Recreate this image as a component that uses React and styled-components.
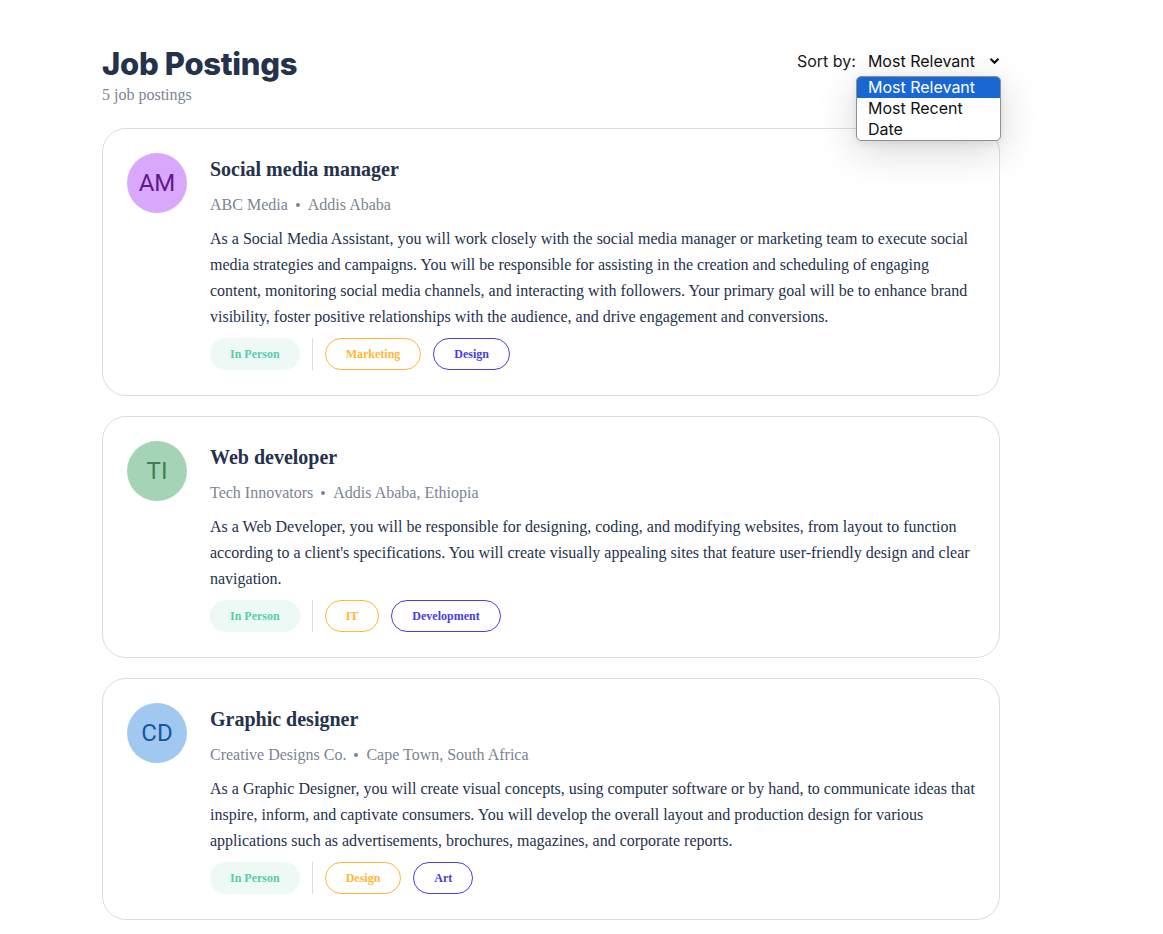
import React from "react";
import styled, { createGlobalStyle } from "styled-components";

const GlobalStyle = createGlobalStyle`
  html, body { margin: 0; padding: 0; background: #ffffff; }
  body { font-family: "Liberation Serif", "Times New Roman", serif; }
  * { box-sizing: border-box; }
`;

const Page = styled.main`
  width: 898px;
  margin-left: 102px;
  padding-top: 44px;
  padding-bottom: 40px;
`;

const Header = styled.header`
  display: flex;
  justify-content: space-between;
  align-items: flex-start;
  margin-bottom: 22px;
`;

const TitleBlock = styled.div`
  display: flex;
  flex-direction: column;
`;

const PageTitle = styled.h1`
  margin: 0;
  font-family: Inter, "Liberation Sans", sans-serif;
  font-weight: 800;
  font-size: 31px;
  line-height: 40px;
  color: #25324b;
  letter-spacing: -0.3px;
`;

const Count = styled.p`
  margin: 0;
  font-size: 16px;
  line-height: 22px;
  color: #7c8493;
`;

const SortWrap = styled.div`
  position: relative;
  display: flex;
  align-items: center;
  gap: 12px;
  font-family: Inter, "Liberation Sans", sans-serif;
  font-size: 16px;
  color: #202020;
  margin-top: 6px;
`;

const SortLabel = styled.span`
  line-height: 22px;
`;

const SelectBox = styled.div`
  display: flex;
  align-items: center;
  gap: 14px;
  line-height: 22px;
  color: #111;
`;

const Menu = styled.ul`
  position: absolute;
  top: 26px;
  left: 59px;
  width: 145px;
  margin: 0;
  padding: 0;
  list-style: none;
  background: #fff;
  border: 1px solid #8f8f8f;
  border-radius: 5px;
  box-shadow: 0 10px 40px rgba(0, 0, 0, 0.16), 0 2px 8px rgba(0, 0, 0, 0.08);
  overflow: hidden;
  z-index: 10;
`;

const MenuItem = styled.li`
  height: 21px;
  line-height: 21px;
  padding-left: 11px;
  font-size: 16px;
  background: ${(p) => (p.$active ? "#1967d2" : "transparent")};
  color: ${(p) => (p.$active ? "#ffffff" : "#111111")};
`;

const List = styled.section`
  display: flex;
  flex-direction: column;
  gap: 20px;
`;

const Card = styled.article`
  display: flex;
  gap: 23px;
  padding: 24px 24px 25px;
  border: 1px solid #d6ddeb;
  border-radius: 24px;
  background: #fff;
`;

const Avatar = styled.div`
  flex: 0 0 60px;
  width: 60px;
  height: 60px;
  border-radius: 50%;
  background: ${(p) => p.$bg};
  color: ${(p) => p.$fg};
  display: flex;
  align-items: center;
  justify-content: center;
  font-family: Roboto, "Liberation Sans", Arial, sans-serif;
  font-size: 24px;
`;

const Body = styled.div`
  flex: 1;
  display: flex;
  flex-direction: column;
`;

const JobTitle = styled.h2`
  margin: 0 0 8px;
  font-size: 20px;
  line-height: 32px;
  font-weight: 700;
  color: #25324b;
`;

const Meta = styled.div`
  display: flex;
  align-items: center;
  gap: 8px;
  font-size: 16px;
  line-height: 24px;
  color: #7c8493;
  margin-bottom: 9px;
`;

const Dot = styled.span`
  width: 4px;
  height: 4px;
  border-radius: 50%;
  background: #7c8493;
`;

const Description = styled.p`
  margin: 0 0 8px;
  font-size: 16px;
  line-height: 26px;
  color: #25324b;
`;

const Tags = styled.div`
  display: flex;
  align-items: center;
  gap: 12px;
`;

const Divider = styled.span`
  width: 1px;
  height: 32px;
  background: #d6ddeb;
`;

const Tag = styled.span`
  height: 32px;
  display: inline-flex;
  align-items: center;
  justify-content: center;
  padding: 0 ${(p) => (p.$border ? "20px" : "19px")};
  border-radius: 80px;
  font-size: 12px;
  font-weight: 700;
  color: ${(p) => p.$color};
  background: ${(p) => p.$bg || "transparent"};
  border: 1px solid ${(p) => p.$border || "transparent"};
`;

const jobs = [
  {
    initials: "AM",
    bg: "#d9a7fb",
    fg: "#62198f",
    title: "Social media manager",
    company: "ABC Media",
    location: "Addis Ababa",
    description:
      "As a Social Media Assistant, you will work closely with the social media manager or marketing team to execute social media strategies and campaigns. You will be responsible for assisting in the creation and scheduling of engaging content, monitoring social media channels, and interacting with followers. Your primary goal will be to enhance brand visibility, foster positive relationships with the audience, and drive engagement and conversions.",
    categories: ["Marketing", "Design"],
  },
  {
    initials: "TI",
    bg: "#a4d4b5",
    fg: "#3f7d53",
    title: "Web developer",
    company: "Tech Innovators",
    location: "Addis Ababa, Ethiopia",
    description:
      "As a Web Developer, you will be responsible for designing, coding, and modifying websites, from layout to function according to a client's specifications. You will create visually appealing sites that feature user-friendly design and clear navigation.",
    categories: ["IT", "Development"],
  },
  {
    initials: "CD",
    bg: "#a1c9ef",
    fg: "#15579f",
    title: "Graphic designer",
    company: "Creative Designs Co.",
    location: "Cape Town, South Africa",
    description:
      "As a Graphic Designer, you will create visual concepts, using computer software or by hand, to communicate ideas that inspire, inform, and captivate consumers. You will develop the overall layout and production design for various applications such as advertisements, brochures, magazines, and corporate reports.",
    categories: ["Design", "Art"],
  },
];

const Chevron = () => (
  <svg width="11" height="8" viewBox="0 0 11 8" aria-hidden="true">
    <path d="M1.5 1.8 L5.5 5.8 L9.5 1.8" fill="none" stroke="#111" strokeWidth="2.2" />
  </svg>
);

export default function App() {
  return (
    <>
      <GlobalStyle />
      <Page>
        <Header>
          <TitleBlock>
            <PageTitle>Job Postings</PageTitle>
            <Count>5 job postings</Count>
          </TitleBlock>
          <SortWrap>
            <SortLabel>Sort by:</SortLabel>
            <SelectBox>
              <span>Most Relevant</span>
              <Chevron />
            </SelectBox>
            <Menu>
              <MenuItem $active>Most Relevant</MenuItem>
              <MenuItem>Most Recent</MenuItem>
              <MenuItem>Date</MenuItem>
            </Menu>
          </SortWrap>
        </Header>
        <List>
          {jobs.map((job) => (
            <Card key={job.title}>
              <Avatar $bg={job.bg} $fg={job.fg}>{job.initials}</Avatar>
              <Body>
                <JobTitle>{job.title}</JobTitle>
                <Meta>
                  <span>{job.company}</span>
                  <Dot />
                  <span>{job.location}</span>
                </Meta>
                <Description>{job.description}</Description>
                <Tags>
                  <Tag $color="#56cdad" $bg="#eef9f6">In Person</Tag>
                  <Divider />
                  {job.categories.map((c, i) => (
                    <Tag
                      key={c}
                      $color={i === 0 ? "#ffb836" : "#4640de"}
                      $border={i === 0 ? "#ffb836" : "#4640de"}
                    >
                      {c}
                    </Tag>
                  ))}
                </Tags>
              </Body>
            </Card>
          ))}
        </List>
      </Page>
    </>
  );
}
